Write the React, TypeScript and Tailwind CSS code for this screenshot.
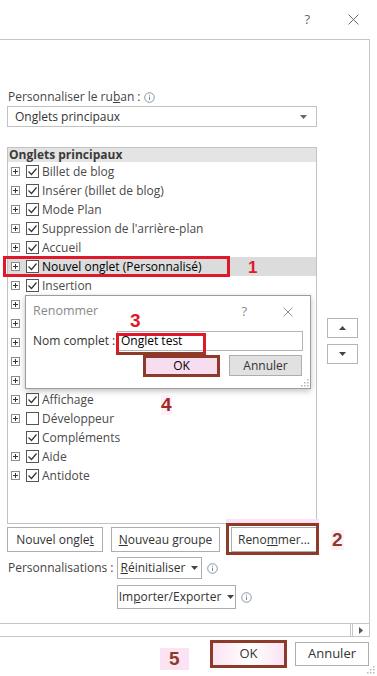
import React from "react";

// ─── data ────────────────────────────────────────────────────────────────────

interface TabRow {
  label: string;
  checked: boolean;
  expandable: boolean;
  selected?: boolean;
}

// rows 8–12 sit under the rename dialog, so their labels never show
const TAB_ROWS: TabRow[] = [
  { label: "Billet de blog", checked: true, expandable: true },
  { label: "Insérer (billet de blog)", checked: true, expandable: true },
  { label: "Mode Plan", checked: true, expandable: true },
  { label: "Suppression de l'arrière-plan", checked: true, expandable: true },
  { label: "Accueil", checked: true, expandable: true },
  { label: "Nouvel onglet (Personnalisé)", checked: true, expandable: true, selected: true },
  { label: "Insertion", checked: true, expandable: true },
  { label: "", checked: true, expandable: true },
  { label: "", checked: true, expandable: true },
  { label: "", checked: true, expandable: true },
  { label: "", checked: true, expandable: true },
  { label: "", checked: true, expandable: true },
  { label: "Affichage", checked: true, expandable: true },
  { label: "Développeur", checked: false, expandable: true },
  { label: "Compléments", checked: true, expandable: false },
  { label: "Aide", checked: true, expandable: true },
  { label: "Antidote", checked: true, expandable: true },
];

const UI_FONT = "font-['Segoe_UI','Open_Sans',sans-serif]";
const MARK_FONT = "font-['Liberation_Sans',Arial,sans-serif]";

// ─── small drawings ──────────────────────────────────────────────────────────

function ExpandBox() {
  return (
    <svg width="9" height="9" viewBox="0 0 9 9" className="shrink-0">
      <rect x="0.5" y="0.5" width="8" height="8" fill="white" stroke="#8c8c8c" />
      <path d="M2 4.5h5M4.5 2v5" stroke="#333" strokeWidth="1" />
    </svg>
  );
}

function CheckBox({ checked }: { checked: boolean }) {
  return (
    <svg width="13" height="13" viewBox="0 0 13 13" className="shrink-0">
      <rect x="0.5" y="0.5" width="12" height="12" fill="white" stroke="#555" />
      {checked && (
        <path d="M2.5 6.5l3 3 5-6" fill="none" stroke="#333" strokeWidth="1.2" />
      )}
    </svg>
  );
}

function InfoIcon() {
  return (
    <svg width="11" height="11" viewBox="0 0 11 11" className="shrink-0">
      <circle cx="5.5" cy="5.5" r="4.8" fill="none" stroke="#7a8a9a" strokeWidth="0.9" />
      <path d="M5.5 4.6v3.4" stroke="#7a8a9a" strokeWidth="1" />
      <circle cx="5.5" cy="3.1" r="0.6" fill="#7a8a9a" />
    </svg>
  );
}

function CloseGlyph({ size, color }: { size: number; color: string }) {
  return (
    <svg width={size} height={size} viewBox="0 0 10 10">
      <path d="M0.5 0.5l9 9M9.5 0.5l-9 9" stroke={color} strokeWidth="0.9" />
    </svg>
  );
}

function DownTriangle({ color = "#444" }: { color?: string }) {
  return (
    <svg width="7" height="4" viewBox="0 0 7 4" className="shrink-0">
      <path d="M0 0h7L3.5 4z" fill={color} />
    </svg>
  );
}

function UpTriangle() {
  return (
    <svg width="7" height="4" viewBox="0 0 7 4">
      <path d="M0 4h7L3.5 0z" fill="#444" />
    </svg>
  );
}

function Grip() {
  return (
    <svg width="9" height="9" viewBox="0 0 9 9">
      {[
        [7, 1], [7, 4], [4, 4], [7, 7], [4, 7], [1, 7],
      ].map(([x, y]) => (
        <rect key={`${x}-${y}`} x={x} y={y} width="1.5" height="1.5" fill="#b5b5b5" />
      ))}
    </svg>
  );
}

// ─── list ────────────────────────────────────────────────────────────────────

function TabListRow({ row }: { row: TabRow }) {
  return (
    <div
      className={`flex h-[19px] items-center pl-[3px] ${row.selected ? "bg-[#dcdcdc] text-black" : "text-[#4a4a4a]"}`}
    >
      <span className="flex w-[15px] justify-start">{row.expandable && <ExpandBox />}</span>
      <CheckBox checked={row.checked} />
      {row.label && <span className="ml-[3px] whitespace-nowrap">{row.label}</span>}
    </div>
  );
}

function TabList() {
  return (
    <div className="mt-[20px] h-[377px] w-[310px] border border-[#c2c2c2] bg-white">
      <div className="h-[14px] bg-[#e4e4e4] pl-[1px] text-[12px] font-bold leading-[14px] text-[#3a3a3a]">
        Onglets principaux
      </div>
      {TAB_ROWS.map((row, i) => (
        <TabListRow key={i} row={row} />
      ))}
    </div>
  );
}

// ─── buttons ─────────────────────────────────────────────────────────────────

function DialogButton({
  children,
  className = "",
}: {
  children: React.ReactNode;
  className?: string;
}) {
  return (
    <div
      className={`flex items-center justify-center border border-[#adadad] bg-white text-[#333] ${className}`}
    >
      {children}
    </div>
  );
}

// ─── overlay dialog ──────────────────────────────────────────────────────────

function RenameDialog() {
  return (
    <div className="absolute left-[25px] top-[295px] h-[94px] w-[286px] border border-[#9c9c9c] bg-white shadow-[0_2px_6px_rgba(0,0,0,0.25)]">
      <div className="flex h-[31px] items-center pl-[7px] text-[#8a8a8a]">
        <span className="text-[12.5px]">Renommer</span>
        <span className="ml-auto mr-[36px] text-[13px]">?</span>
        <span className="mr-[17px]">
          <CloseGlyph size={10} color="#8a8a8a" />
        </span>
      </div>
      <div className="flex h-[28px] items-center pl-[7px]">
        <span className="w-[84px] text-[#333]">Nom complet :</span>
        <div className="flex h-[20px] w-[186px] items-center border border-[#b5b5b5] pl-[3px] text-black">
          Onglet test
        </div>
      </div>
      <div className="flex items-start pl-[117px]">
        <div className="flex h-[22px] w-[77px] items-center justify-center border-[3px] border-[#8e3a28] bg-[#f8dcef] text-black">
          OK
        </div>
        <DialogButton className="ml-[9px] h-[21px] w-[73px] !bg-[#e1e1e1]">Annuler</DialogButton>
      </div>
      <div className="absolute bottom-[1px] right-[1px]">
        <Grip />
      </div>
    </div>
  );
}

// ─── root ────────────────────────────────────────────────────────────────────

export default function App() {
  return (
    <div className={`relative h-[676px] w-[377px] overflow-hidden bg-white text-[12px] ${UI_FONT}`}>
      {/* title bar */}
      <div className="flex h-[39px] items-center justify-end text-[#666]">
        <span className="mr-[38px] text-[13px]">?</span>
        <span className="mr-[18px]">
          <CloseGlyph size={11} color="#666" />
        </span>
      </div>

      {/* customize panel */}
      <div className="flex h-[598px] w-[370px] flex-col border-r border-t border-[#c6c6c6]">
        <div className="flex flex-1 flex-col pl-[7px] pt-[49px]">
          <div className="flex h-[16px] items-center gap-[3px] pl-[1px] text-[#444]">
            <span>
              Personnaliser le ru<span className="underline">b</span>an :
            </span>
            <InfoIcon />
          </div>

          <div className="mt-[1px] flex h-[21px] w-[310px] items-center justify-between border border-[#c2c2c2] pl-[7px] pr-[9px] text-[#333]">
            <span>Onglets principaux</span>
            <DownTriangle color="#666" />
          </div>

          <div className="flex items-start">
            <TabList />
            <div className="ml-[10px] mt-[191px] flex flex-col gap-[6px]">
              <div className="flex h-[20px] w-[31px] items-center justify-center border border-[#b5b5b5]">
                <UpTriangle />
              </div>
              <div className="flex h-[20px] w-[31px] items-center justify-center border border-[#b5b5b5]">
                <DownTriangle />
              </div>
            </div>
          </div>

          <div className="mt-[3px] flex items-center">
            <DialogButton className="h-[25px] w-[96px]">
              Nouvel ongle<span className="underline">t</span>
            </DialogButton>
            <DialogButton className="ml-[8px] h-[25px] w-[109px]">
              <span className="underline">N</span>ouveau groupe
            </DialogButton>
            <DialogButton className="ml-[11px] h-[25px] w-[86px]">
              Reno<span className="underline">m</span>mer...
            </DialogButton>
          </div>

          <div className="mt-[5px] flex items-center">
            <span className="w-[110px] pl-[1px] text-[#444]">Personnalisations :</span>
            <DialogButton className="h-[22px] w-[85px] gap-[6px] border-[#9a9a9a]">
              <span>
                <span className="underline">R</span>éinitialiser
              </span>
              <DownTriangle />
            </DialogButton>
            <span className="ml-[5px]">
              <InfoIcon />
            </span>
          </div>
          <div className="mt-[6px] flex items-center pl-[110px]">
            <DialogButton className="h-[24px] w-[119px] gap-[6px] border-[#9a9a9a]">
              <span>
                Im<span className="underline">p</span>orter/Exporter
              </span>
              <DownTriangle />
            </DialogButton>
            <span className="ml-[5px]">
              <InfoIcon />
            </span>
          </div>
        </div>

        {/* horizontal scrollbar */}
        <div className="flex h-[14px] border-y border-[#c6c6c6]">
          <div className="flex-1" />
          <div className="w-[2px] border-l border-[#c6c6c6]" />
          <div className="flex w-[17px] items-center justify-center border-l border-[#c6c6c6]">
            <svg width="4" height="7" viewBox="0 0 4 7">
              <path d="M0 0v7l4-3.5z" fill="#555" />
            </svg>
          </div>
        </div>
      </div>

      {/* footer buttons */}
      <div className="mt-[3px] flex items-center">
        <div className="ml-[210px] flex h-[28px] w-[77px] items-center justify-center border-[3px] border-[#8e3a28] bg-gradient-to-r from-[#fbe3f3] via-white to-[#fbe3f3] text-[13px] text-[#333]">
          OK
        </div>
        <DialogButton className="ml-[8px] h-[24px] w-[74px] text-[13px]">Annuler</DialogButton>
      </div>
      <div className="absolute bottom-[2px] right-[2px]">
        <Grip />
      </div>

      {/* overlay: rename dialog */}
      <RenameDialog />

      {/* overlay: annotations */}
      <div className="pointer-events-none absolute left-[3px] top-[256px] h-[21px] w-[227px] border-[3px] border-[#e0182c]" />
      <span className={`absolute left-[248px] top-[258px] text-[17px] font-bold leading-[20px] text-[#e0182c] ${MARK_FONT}`}>
        1
      </span>

      <div className="pointer-events-none absolute left-[226px] top-[523px] h-[32px] w-[93px] border-[3px] border-[#8e3a28] shadow-[0_-4px_0_#fbe3f3]" />
      <span className={`absolute left-[331px] top-[530px] bg-[#fdf0f8] px-[1px] text-[19px] font-bold leading-[20px] text-[#8e3a28] ${MARK_FONT}`}>
        2
      </span>

      <div className="pointer-events-none absolute left-[116px] top-[333px] h-[22px] w-[90px] border-[3px] border-[#e0182c] border-b-[#8e3a28]" />
      <span className={`absolute left-[130px] top-[311px] text-[19px] font-bold leading-[20px] text-[#e0182c] ${MARK_FONT}`}>
        3
      </span>

      <span className={`absolute left-[161px] top-[395px] bg-[#fdf0f8] text-[19px] font-bold leading-[20px] text-[#a02a22] ${MARK_FONT}`}>
        4
      </span>

      <span className={`absolute left-[160px] top-[648px] bg-[#fbe3f3] px-[9px] text-[19px] font-bold leading-[22px] text-[#8e3a28] ${MARK_FONT}`}>
        5
      </span>
    </div>
  );
}
